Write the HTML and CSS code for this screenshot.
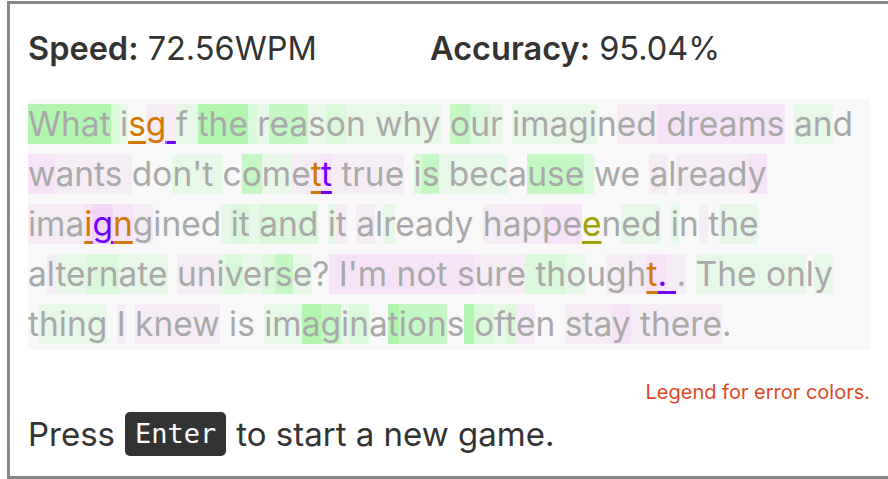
FILE: index.html
```html
<!DOCTYPE html>
<html lang="en">
<head>
<meta charset="utf-8">
<title>Typing game</title>
<link rel="stylesheet" href="styles.css">
</head>
<body>
<div class="game">
  <div class="stats">
    <div class="stat"><b>Speed:</b> 72.56WPM</div>
    <div class="stat"><b>Accuracy:</b> 95.04%</div>
  </div>
  <div class="text">
<div class="line"><span class="g4">What</span><span class="g2"> </span><span class="g1">i</span><span class="eo">s</span><span class="eo p1">g</span><span class="ep p1"> </span><span class="g1">f </span><span class="g4">the</span><span class="g2"> </span><span class="g1">r</span><span class="g3">ea</span><span class="g1">s</span><span class="g2">o</span><span class="g1">n why</span> <span class="g3">o</span><span class="g2">u</span><span class="g1">r</span> <span class="g1">imagi</span>n<span class="p1">ed</span><span class="p2"> dreams</span> <span class="g1">an</span>d</div>
<div class="line"><span class="p2">w</span><span class="p1">ants </span>do<span class="g1">n't </span>c<span class="g3">o</span><span class="g1">m</span><span class="p1">e</span><span class="eo p1">t</span><span class="ep p2">t</span><span class="p1"> true</span> <span class="g2">i</span><span class="g3">s</span><span class="g1"> bec</span>a<span class="g3">use</span><span class="g2"> </span>we <span class="p1">a</span>l<span class="p1">read</span><span class="p2">y</span></div>
<div class="line"><span class="p1">ima</span><span class="eo p2">i</span><span class="ep p3">g</span><span class="eo p2">n</span><span class="p1">g</span>ined<span class="g1"> </span><span class="g2">it</span><span class="g1"> </span><span class="g2">and</span> <span class="g1">i</span><span class="p1">t</span> <span class="p1">a</span>l<span class="g1">r</span>eady <span class="p1">hap</span><span class="p2">pe</span><span class="ey">e</span>n<span class="g1">ed</span> <span class="g1">i</span>n<span class="p1"> </span>t<span class="g1">he</span></div>
<div class="line">a<span class="p1">l</span><span class="g1">te</span><span class="g2">rn</span><span class="g1">ate</span> <span class="p1">un</span><span class="g1">i</span><span class="g2">v</span><span class="g1">e</span><span class="g2">r</span><span class="g3">s</span><span class="g1">e</span>?<span class="p2"> I'm not </span><span class="p2">s</span><span class="p1">ure</span><span class="g2"> th</span><span class="g1">o</span>u<span class="p1">gh</span><span class="eo p2">t</span><span class="ep p2">.</span><span class="ep p1"> </span><span class="p1">.</span> <span class="g1">The on</span>l<span class="g1">y</span></div>
<div class="line">t<span class="g1">hing</span> <span class="p1">I</span> <span class="p1">knew</span> is <span class="g1">im</span><span class="g4">a</span><span class="g3">g</span><span class="g1">i</span><span class="g2">n</span>a<span class="g4">t</span><span class="g3">ion</span>s<span class="g4"> </span><span class="g2">o</span><span class="g1">f</span><span class="g2">t</span><span class="p1">e</span>n <span class="p1">sta</span><span class="p2">y</span><span class="p1"> there</span>.</div>
  </div>
  <div class="legend">Legend for error colors.</div>
  <div class="prompt">Press <kbd class="key">Enter</kbd> to start a new game.</div>
</div>
</body>
</html>
```
FILE: styles.css
```css
html, body {
  margin: 0;
  padding: 0;
  background: #fff;
}
body {
  font-family: "Inter", "Open Sans", sans-serif;
  color: #333;
}
.game {
  margin: 1px 0 0 7px;
  width: 842px;
  height: 447px;
  padding: 25px 18px 0;
  border: 3px solid #888;
}
.stats {
  display: grid;
  grid-template-columns: 402px auto;
  font-size: 32.5px;
  line-height: 40px;
  height: 40px;
}
.stat b {
  font-weight: 600;
}
.text {
  margin-top: 30px;
  background: #f8f8f8;
  color: #a9a9a9;
  font-size: 33.5px;
  line-height: 50px;
  height: 251px;
}
.line {
  white-space: pre;
  height: 50px;
}
.g1 { background: #e8f8e8; }
.g2 { background: #daf8da; }
.g3 { background: #c4f7c4; }
.g4 { background: #b1f5b1; }
.p1 { background: #f6ecf6; }
.p2 { background: #f7e3f7; }
.p3 { background: #f3d6f6; }
.eo, .ep, .ey {
  text-decoration: underline;
  text-decoration-thickness: 3px;
  text-underline-offset: 5px;
  text-decoration-skip-ink: auto;
}
.eo { color: #d07800; }
.ep { color: #7000ff; }
.ey { color: #a0a000; }
.legend {
  margin-top: 30px;
  text-align: right;
  font-size: 20px;
  line-height: 24px;
  color: #e0481f;
}
.prompt {
  margin-top: 8px;
  display: flex;
  align-items: center;
  gap: 10px;
  font-size: 33px;
  line-height: 44px;
  height: 44px;
}
.key {
  font-family: "DejaVu Sans Mono", monospace;
  font-size: 27px;
  background: #333;
  color: #fff;
  border-radius: 5px;
  padding: 0 10px;
  line-height: 44px;
}
```
